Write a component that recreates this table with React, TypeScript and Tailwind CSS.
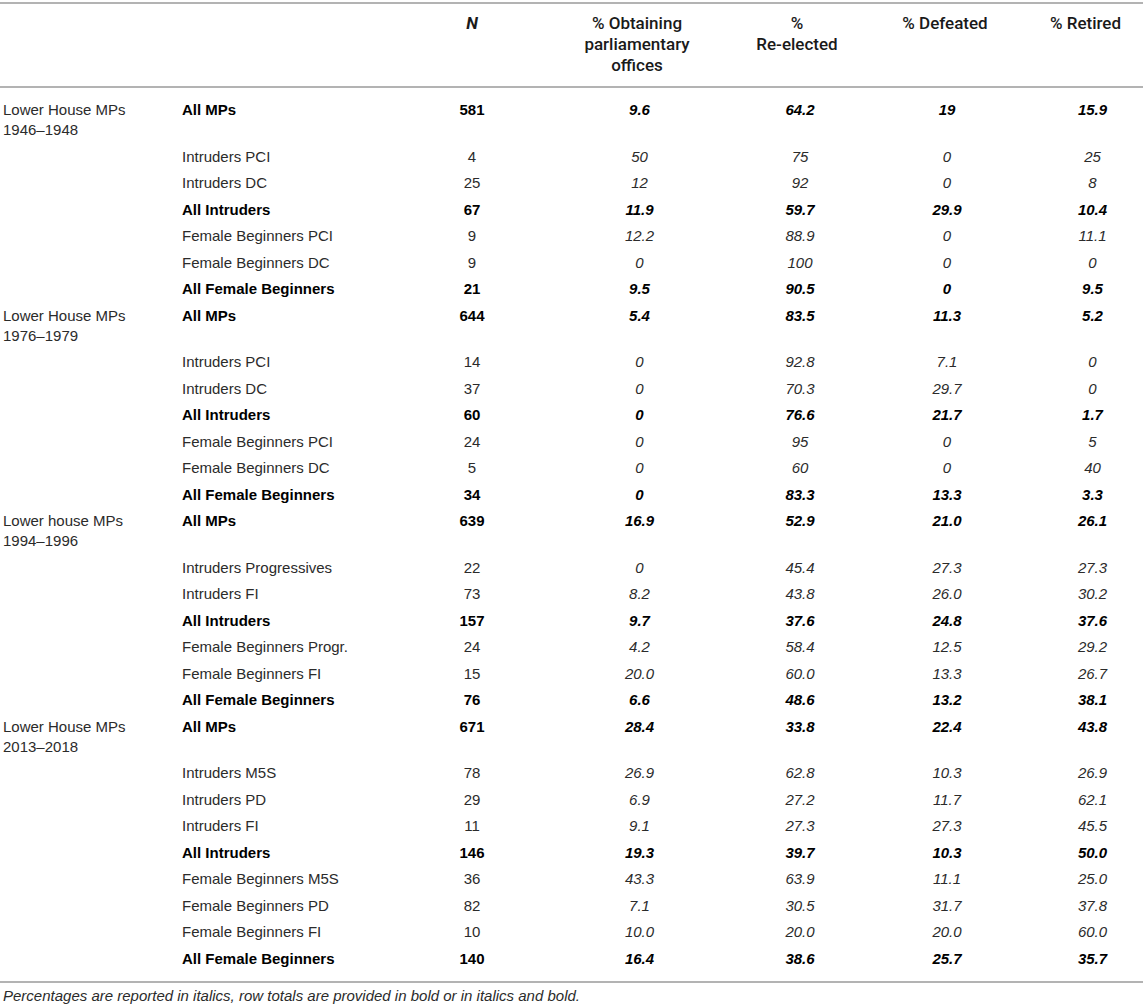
import React from "react";

type Row = { label: string; bold?: boolean; vals: string[] };
type Group = { title: [string, string]; rows: Row[] };

const groups: Group[] = [
  {
    title: ["Lower House MPs", "1946–1948"],
    rows: [
      { label: "All MPs", bold: true, vals: ["581", "9.6", "64.2", "19", "15.9"] },
      { label: "Intruders PCI", vals: ["4", "50", "75", "0", "25"] },
      { label: "Intruders DC", vals: ["25", "12", "92", "0", "8"] },
      { label: "All Intruders", bold: true, vals: ["67", "11.9", "59.7", "29.9", "10.4"] },
      { label: "Female Beginners PCI", vals: ["9", "12.2", "88.9", "0", "11.1"] },
      { label: "Female Beginners DC", vals: ["9", "0", "100", "0", "0"] },
      { label: "All Female Beginners", bold: true, vals: ["21", "9.5", "90.5", "0", "9.5"] },
    ],
  },
  {
    title: ["Lower House MPs", "1976–1979"],
    rows: [
      { label: "All MPs", bold: true, vals: ["644", "5.4", "83.5", "11.3", "5.2"] },
      { label: "Intruders PCI", vals: ["14", "0", "92.8", "7.1", "0"] },
      { label: "Intruders DC", vals: ["37", "0", "70.3", "29.7", "0"] },
      { label: "All Intruders", bold: true, vals: ["60", "0", "76.6", "21.7", "1.7"] },
      { label: "Female Beginners PCI", vals: ["24", "0", "95", "0", "5"] },
      { label: "Female Beginners DC", vals: ["5", "0", "60", "0", "40"] },
      { label: "All Female Beginners", bold: true, vals: ["34", "0", "83.3", "13.3", "3.3"] },
    ],
  },
  {
    title: ["Lower house MPs", "1994–1996"],
    rows: [
      { label: "All MPs", bold: true, vals: ["639", "16.9", "52.9", "21.0", "26.1"] },
      { label: "Intruders Progressives", vals: ["22", "0", "45.4", "27.3", "27.3"] },
      { label: "Intruders FI", vals: ["73", "8.2", "43.8", "26.0", "30.2"] },
      { label: "All Intruders", bold: true, vals: ["157", "9.7", "37.6", "24.8", "37.6"] },
      { label: "Female Beginners Progr.", vals: ["24", "4.2", "58.4", "12.5", "29.2"] },
      { label: "Female Beginners FI", vals: ["15", "20.0", "60.0", "13.3", "26.7"] },
      { label: "All Female Beginners", bold: true, vals: ["76", "6.6", "48.6", "13.2", "38.1"] },
    ],
  },
  {
    title: ["Lower House MPs", "2013–2018"],
    rows: [
      { label: "All MPs", bold: true, vals: ["671", "28.4", "33.8", "22.4", "43.8"] },
      { label: "Intruders M5S", vals: ["78", "26.9", "62.8", "10.3", "26.9"] },
      { label: "Intruders PD", vals: ["29", "6.9", "27.2", "11.7", "62.1"] },
      { label: "Intruders FI", vals: ["11", "9.1", "27.3", "27.3", "45.5"] },
      { label: "All Intruders", bold: true, vals: ["146", "19.3", "39.7", "10.3", "50.0"] },
      { label: "Female Beginners M5S", vals: ["36", "43.3", "63.9", "11.1", "25.0"] },
      { label: "Female Beginners PD", vals: ["82", "7.1", "30.5", "31.7", "37.8"] },
      { label: "Female Beginners FI", vals: ["10", "10.0", "20.0", "20.0", "60.0"] },
      { label: "All Female Beginners", bold: true, vals: ["140", "16.4", "38.6", "25.7", "35.7"] },
    ],
  },
];

const cols = "grid grid-cols-[180px_220px_144px_186px_134px_162px_117px]";
const valPad = ["", "pl-[5px]", "pl-[6px]", "pl-[4px]", "pl-[16px]"];

export default function App() {
  return (
    <div
      className="w-[1143px] bg-white text-[15px] text-[#2b2b2b]"
      style={{ fontFamily: '"Liberation Sans", Arial, sans-serif' }}
    >
      <div className="h-[2px] mt-[2px] bg-[#b3b3b3]" />
      {/* header */}
      <div
        className={`${cols} pt-[9px] pb-[10px] text-[17px] leading-[21px] font-medium text-[#1a1a1a]`}
        style={{ fontFamily: 'Roboto, "Liberation Sans", sans-serif' }}
      >
        <div />
        <div />
        <div className="text-center italic font-bold">N</div>
        <div className="text-center">
          % Obtaining
          <br />
          parliamentary
          <br />
          offices
        </div>
        <div className="text-center">
          %
          <br />
          Re-elected
        </div>
        <div className="text-center">% Defeated</div>
        <div className="text-center pl-[2px]">% Retired</div>
      </div>
      <div className="h-[2px] bg-[#b3b3b3]" />
      {/* body */}
      <div className="pt-[9px] pb-[9px]">
        {groups.map((g, gi) => (
          <div key={gi}>
            {g.rows.map((r, ri) => (
              <div key={ri} className={`${cols} leading-[20px] py-[3.25px]`}>
                <div className="pl-[3px]">
                  {ri === 0 ? (
                    <>
                      {g.title[0]}
                      <br />
                      {g.title[1]}
                    </>
                  ) : null}
                </div>
                <div className={`pl-[2px] ${r.bold ? "font-bold text-black" : ""}`}>{r.label}</div>
                {r.vals.map((v, vi) => (
                  <div
                    key={vi}
                    className={`text-center ${valPad[vi]} ${vi > 0 ? "italic" : ""} ${r.bold ? "font-bold text-black" : ""}`}
                  >
                    {v}
                  </div>
                ))}
              </div>
            ))}
          </div>
        ))}
      </div>
      <div className="h-[2px] bg-[#b3b3b3]" />
      <div className="pl-[3px] pt-[4px] text-[15px] leading-[17px] italic text-[#2b2b2b]">
        Percentages are reported in italics, row totals are provided in bold or in italics and bold.
      </div>
    </div>
  );
}
